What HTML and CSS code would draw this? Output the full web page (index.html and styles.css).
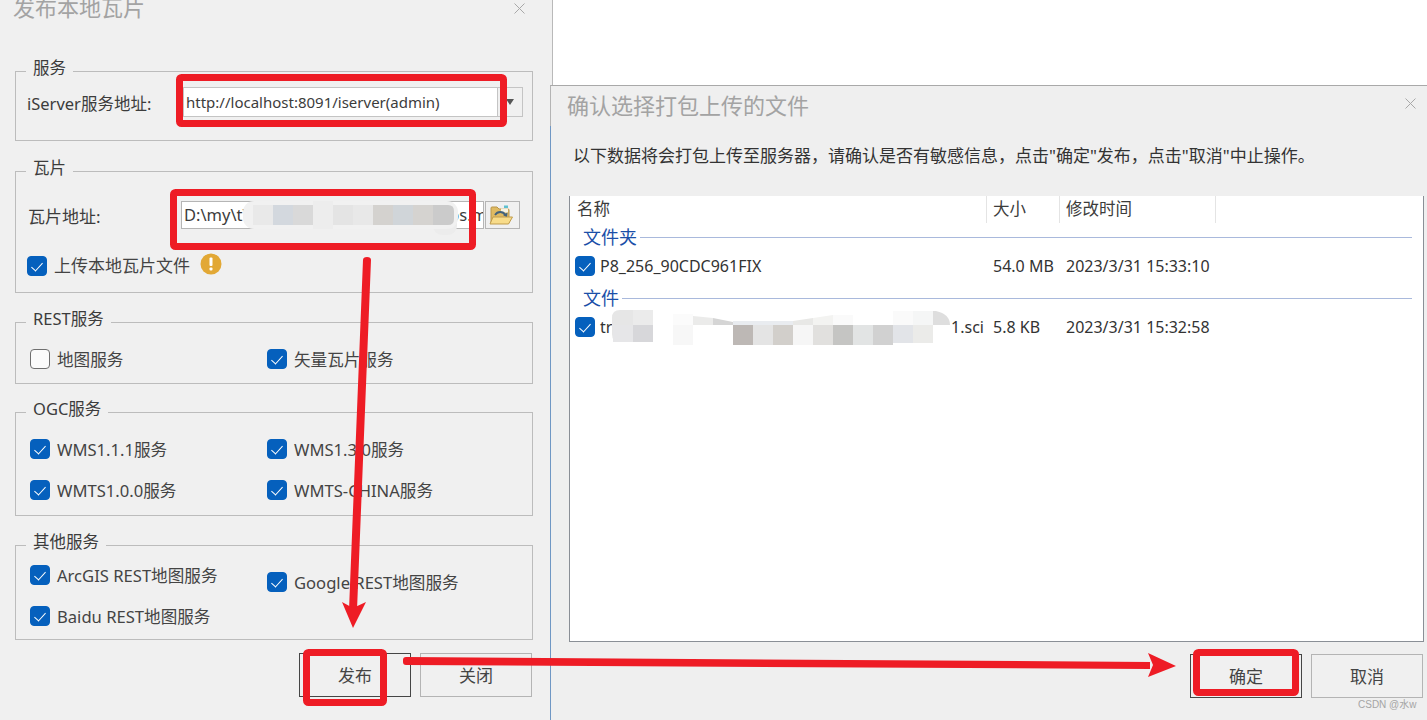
FILE: index.html
```html
<!DOCTYPE html>
<html lang="zh-CN">
<head>
  <meta charset="UTF-8">
  <title>发布本地瓦片</title>
  <link rel="stylesheet" href="styles.css">
</head>
<body>

  <!-- Publish dialog -->
  <section class="dialog publish">
    <div class="title-bar">
      <h1>发布本地瓦片</h1>
      <svg class="close" viewBox="0 0 11 11"><path d="M0.5 0.5l10 10M10.5 0.5l-10 10"/></svg>
    </div>

    <fieldset class="group g-server">
      <legend>服务</legend>
      <div class="field-row">
        <label class="server-label">iServer服务地址:</label>
        <div class="combo">
          <span class="combo-text">http://localhost:8091/iserver(admin)</span>
          <span class="combo-arrow"></span>
        </div>
      </div>
    </fieldset>

    <fieldset class="group g-tiles">
      <legend>瓦片</legend>
      <div class="field-row">
        <label class="tiles-label">瓦片地址:</label>
        <div class="path-input"><span>D:\my\t\</span><span class="path-end">os.m</span></div>
        <button class="browse" type="button">
          <svg viewBox="0 0 24 20" width="24" height="20">
            <path d="M2 18V3q0-1 1-1h5l2 2h9q1 0 1 1v13z" fill="#dfba62" stroke="#b8954a"/>
            <path d="M12 3.500h7v4h-7z" fill="#f7f3e2"/>
            <path d="M15 .5h4v2.500h-4z" fill="#5fc0cf"/>
            <path d="M6 10c2.500-4 8-4 10.500 0" fill="none" stroke="#43627c" stroke-width="1.800"/>
            <path d="M18.500 7.500l-.5 5-4-2.500z" fill="#43627c"/>
            <path d="M1 19l3-7h19.500l-4 7z" fill="#f8dc8a" stroke="#c09c4c"/>
          </svg>
        </button>
      </div>
      <div class="upload-row">
        <span class="check on"></span>
        <span class="opt-text">上传本地瓦片文件</span>
        <svg class="warn" viewBox="0 0 22 22" width="22" height="22">
          <circle cx="11" cy="11" r="10.500" fill="#e2a835"/>
          <rect x="9.500" y="4.500" width="3" height="8.500" rx="1" fill="#fff"/>
          <rect x="9.500" y="14.500" width="3" height="3" rx="1" fill="#fff"/>
        </svg>
      </div>
    </fieldset>

    <fieldset class="group g-rest">
      <legend>REST服务</legend>
      <div class="opts">
        <div class="opt"><span class="check"></span><span class="opt-text">地图服务</span></div>
        <div class="opt"><span class="check on"></span><span class="opt-text">矢量瓦片服务</span></div>
      </div>
    </fieldset>

    <fieldset class="group g-ogc">
      <legend>OGC服务</legend>
      <div class="opts">
        <div class="opt"><span class="check on"></span><span class="opt-text">WMS1.1.1服务</span></div>
        <div class="opt"><span class="check on"></span><span class="opt-text">WMS1.3.0服务</span></div>
        <div class="opt"><span class="check on"></span><span class="opt-text">WMTS1.0.0服务</span></div>
        <div class="opt"><span class="check on"></span><span class="opt-text">WMTS-CHINA服务</span></div>
      </div>
    </fieldset>

    <fieldset class="group g-other">
      <legend>其他服务</legend>
      <div class="opts">
        <div class="opt"><span class="check on"></span><span class="opt-text">ArcGIS REST地图服务</span></div>
        <div class="opt shifted"><span class="check on"></span><span class="opt-text">Google REST地图服务</span></div>
        <div class="opt"><span class="check on"></span><span class="opt-text">Baidu REST地图服务</span></div>
      </div>
    </fieldset>

    <div class="actions">
      <button class="btn primary" type="button">发布</button>
      <button class="btn" type="button">关闭</button>
    </div>
    <span class="grip"></span>
  </section>

  <!-- Confirm dialog -->
  <section class="dialog confirm">
    <div class="title-bar">
      <h1>确认选择打包上传的文件</h1>
      <svg class="close" viewBox="0 0 11 11"><path d="M0.5 0.5l10 10M10.5 0.5l-10 10"/></svg>
    </div>
    <p class="desc">以下数据将会打包上传至服务器，请确认是否有敏感信息，点击"确定"发布，点击"取消"中止操作。</p>

    <div class="file-list">
      <div class="list-head">
        <span>名称</span>
        <span>大小</span>
        <span>修改时间</span>
      </div>
      <div class="list-group"><span>文件夹</span><i></i></div>
      <div class="list-row">
        <span class="name"><span class="check on"></span>P8_256_90CDC961FIX</span>
        <span>54.0 MB</span>
        <span>2023/3/31 15:33:10</span>
      </div>
      <div class="list-group"><span>文件</span><i></i></div>
      <div class="list-row">
        <span class="name"><span class="check on"></span>tr<em class="name-end">1.sci</em></span>
        <span>5.8 KB</span>
        <span>2023/3/31 15:32:58</span>
      </div>
    </div>

    <div class="actions">
      <button class="btn primary" type="button">确定</button>
      <button class="btn" type="button">取消</button>
    </div>
  </section>

  <span class="watermark">CSDN @水w</span>

  <!-- Annotations drawn over the screenshot -->
  <svg class="marks" viewBox="0 0 1427 720" width="1427" height="720">
    <g class="smudge">
      <rect x="433" y="203" width="24" height="32" rx="9" fill="#ececec"/>
      <rect x="243" y="201" width="215" height="28" rx="11" fill="#f1f1f1"/>
      <rect x="253" y="205" width="20" height="20" fill="#e9e9e9"/>
      <rect x="273" y="205" width="20" height="20" fill="#d3d8de"/>
      <rect x="293" y="205" width="20" height="20" fill="#d9d9d9"/>
      <rect x="313" y="201" width="20" height="28" fill="#ededed"/>
      <rect x="333" y="205" width="20" height="20" fill="#e4e4e4"/>
      <rect x="353" y="205" width="20" height="20" fill="#e8e8e8"/>
      <rect x="373" y="205" width="20" height="20" fill="#d4d2cf"/>
      <rect x="393" y="205" width="20" height="20" fill="#d0d5d9"/>
      <rect x="413" y="205" width="20" height="20" fill="#d5d3d0"/>
      <path d="M433 205h15q6 0 6 6v8q0 6-6 6h-15z" fill="#cbcbcb"/>

      <path d="M620 310h33v32h-33q-8 0-8-8v-16q0-8 8-8z" fill="#e6e6e6"/>
      <rect x="633" y="310" width="20" height="15" fill="#ebebeb"/>
      <rect x="613" y="325" width="20" height="17" fill="#e6e6e8"/>
      <rect x="633" y="325" width="20" height="17" fill="#d7d7da"/>
      <rect x="673" y="314" width="20" height="11" fill="#fbfbfb"/>
      <rect x="673" y="325" width="20" height="20" fill="#f7f7f7"/>
      <path d="M693 316l20 2v7h-20z" fill="#ebebea"/>
      <path d="M713 318l20 4v3h-20z" fill="#d5d5d5"/>
      <path d="M733 321h60v4h-60z" fill="#e9ecf0"/>
      <path d="M793 321l20-3v7h-20z" fill="#e8e8e6"/>
      <path d="M813 318l20-3v10h-20z" fill="#f3f3f1"/>
      <path d="M833 315h20v10h-20z" fill="#fafafa"/>
      <path d="M893 311h20v14h-20z" fill="#fafafa"/>
      <path d="M913 311h20v14h-20z" fill="#f5f6f6"/>
      <path d="M933 311h3q14 3 14 14h-17z" fill="#dedede"/>
      <rect x="733" y="325" width="20" height="20" fill="#bdb8b5"/>
      <rect x="753" y="325" width="20" height="20" fill="#e4e4e4"/>
      <rect x="773" y="325" width="20" height="20" fill="#d2cfcb"/>
      <rect x="793" y="325" width="20" height="20" fill="#f6f6f6"/>
      <rect x="813" y="325" width="20" height="20" fill="#e1e0de"/>
      <rect x="833" y="325" width="20" height="20" fill="#c5c5c3"/>
      <rect x="853" y="325" width="20" height="20" fill="#e2e4e4"/>
      <rect x="873" y="325" width="20" height="20" fill="#d1d1d1"/>
      <rect x="893" y="325" width="20" height="18" fill="#e2e4e8"/>
      <rect x="913" y="325" width="20" height="18" fill="#ebebe9"/>
    </g>
    <g class="boxes">
      <rect x="179.500" y="77.500" width="324" height="46" rx="2"/>
      <rect x="173.500" y="192.500" width="299" height="54" rx="2"/>
      <rect x="306.500" y="652.500" width="77" height="50" rx="2"/>
      <rect x="1196.500" y="652.500" width="99" height="40" rx="2"/>
    </g>
    <g class="arrows">
      <path d="M363 260q0-3 4-3t4 3L357 610H349z"/>
      <path d="M342 602L353 628L366 602L353 608z"/>
      <path d="M403 660q0-3 3-3L1150 662V669L406 665q-3 0-3-3z"/>
      <path d="M1148 653L1176 666L1148 677L1153 665z"/>
    </g>
  </svg>

</body>
</html>
```

FILE: styles.css
```css
* {
  box-sizing: border-box;
}

body {
  margin: 0;
  width: 1427px;
  height: 720px;
  overflow: hidden;
  position: relative;
  background: #fff;
  font-family: "Noto Sans", "Noto Sans CJK SC", sans-serif;
  color: #3c3c3c;
}

.dialog {
  position: absolute;
  background: #f0f0f0;
}

.publish {
  left: 0;
  top: 0;
  width: 553px;
  height: 720px;
  padding: 0 19px 0 15px;
  border-right: 1px solid #b9b9b9;
}

.confirm {
  left: 550px;
  top: 85px;
  width: 877px;
  height: 635px;
  background: #efefef;
  border-top: 1px solid #a9a9a9;
  border-left: 1px solid #b4b4b4;
}

/* lower part of the window edge is the blue of the focused frame */
.confirm::before {
  content: "";
  position: absolute;
  left: -1px;
  top: 40px;
  bottom: 0;
  width: 1px;
  background: #6f97c4;
}

.title-bar {
  display: flex;
  justify-content: space-between;
  align-items: center;
}

.title-bar h1 {
  margin: 0;
  font-size: 22px;
  font-weight: 400;
  color: #a3a3a3;
}

.publish .title-bar {
  height: 59px;
  margin: 0 8px 0 -2px;
  align-items: flex-start;
}

.publish .title-bar h1 {
  line-height: 14px;
}

.publish .close {
  margin-top: 3px;
}

.confirm .title-bar {
  height: 41px;
  padding: 0 11px 6px 16px;
}

.close {
  width: 11px;
  height: 11px;
  fill: none;
  stroke: #a8a8a8;
}

/* group boxes */
.group {
  margin: 17px 0 0;
  padding: 0 0 0 11px;
  min-width: 0;
  border: 1px solid #bcbcbc;
  font-size: 16.600px;
}

.group legend {
  margin-left: -1px;
  padding: 0 7px;
  height: 24px;
  line-height: 18px;
  font-size: 16.500px;
}

.title-bar + .group {
  margin-top: 0;
}

.g-server {
  height: 82px;
}

.g-tiles {
  height: 134px;
  margin-top: 18px;
}

.g-rest {
  height: 74px;
}

.g-ogc {
  height: 116px;
  margin-top: 16px;
}

.g-other {
  height: 107px;
}

.field-row {
  display: flex;
  align-items: center;
}

.g-server .field-row {
  padding-top: 4px;
}

.g-tiles .field-row {
  padding-top: 18px;
  padding-left: 1px;
}

.server-label {
  width: 156px;
  font-size: 16.500px;
  padding-top: 1px;
}

.tiles-label {
  width: 153px;
  font-size: 17px;
}

.combo {
  width: 340px;
  height: 30px;
  display: flex;
  background: #f0f0f0;
  border: 1px solid #c4c4c4;
}

.combo-text {
  width: 314px;
  padding-left: 2px;
  background: #fff;
  border-right: 1px solid #c4c4c4;
  line-height: 28px;
  font-size: 15px;
  white-space: nowrap;
}

.combo-arrow {
  margin: 11px auto 0;
  width: 0;
  height: 0;
  border: 4px solid transparent;
  border-top: 6px solid #555;
}

.path-input {
  width: 303px;
  height: 28px;
  display: flex;
  justify-content: space-between;
  padding: 0 1px 0 2px;
  background: #fff;
  border: 1px solid #b5b5b5;
  line-height: 26px;
  font-size: 16.500px;
  overflow: hidden;
}

/* the path runs on past the right edge of the box */
.path-end {
  margin-right: -5px;
}

.browse {
  width: 35px;
  height: 28px;
  margin-left: 1px;
  padding: 0 4px 0 0;
  display: flex;
  align-items: center;
  justify-content: center;
  background: #f0f0f0;
  border: 1px solid #b5b5b5;
}

.upload-row {
  display: flex;
  align-items: center;
  margin-top: 25px;
}

.upload-row .opt-text {
  margin-left: 7px;
  margin-top: -2px;
  font-size: 17px;
}

.warn {
  margin-left: 10px;
  margin-top: -4px;
}

.opts {
  display: grid;
  grid-template-columns: 237px 237px;
  grid-auto-rows: 20px;
  row-gap: 21px;
  padding: 15px 0 0 3px;
}

.g-other .opts {
  padding-top: 8px;
}

.opt {
  display: flex;
  align-items: center;
  gap: 7px;
  white-space: nowrap;
}

.opt.shifted {
  margin-top: 14px;
}

.opt-text {
  white-space: nowrap;
  color: #444;
}

.check {
  display: inline-block;
  position: relative;
  flex: none;
  width: 20px;
  height: 20px;
  background: #fbfbfb;
  border: 1px solid #6f6f6f;
  border-radius: 4px;
}

.check.on {
  background: #0560bd;
  border-color: #0560bd;
}

.check.on::after {
  content: "";
  position: absolute;
  left: 6px;
  top: 3px;
  width: 5px;
  height: 10px;
  border: solid #fff;
  border-width: 0 1px 1px 0;
  transform: rotate(42deg);
}

.actions {
  display: flex;
  justify-content: flex-end;
  gap: 9px;
}

.publish .actions {
  margin-top: 13px;
  margin-right: 1px;
}

.confirm .actions {
  margin-top: 12px;
  margin-right: 4px;
}

.btn {
  width: 112px;
  height: 44px;
  padding: 0 0 2px;
  background: #f0f0f0;
  border: 1px solid #b4b4b4;
  font-family: inherit;
  font-size: 17px;
  color: #444;
}

.btn.primary {
  border-color: #454545;
}

.grip {
  position: absolute;
  right: 5px;
  bottom: 1px;
  width: 5px;
  height: 5px;
  background: radial-gradient(#8a8a8a 40%, transparent 45%) 0 0 / 2px 2px;
}

/* file list */
.desc {
  margin: 17px 0 0 22px;
  height: 24px;
  line-height: 24px;
  font-size: 17px;
  color: #333;
  white-space: nowrap;
}

.file-list {
  width: 855px;
  height: 446px;
  margin: 28px 0 0 18px;
  background: #fff;
  border: 1px solid #8a8f96;
  border-top: none;
  font-size: 16.500px;
}

.list-head,
.list-row {
  display: grid;
  grid-template-columns: 417px 73px 156px;
}

.list-head {
  height: 27px;
  line-height: 26px;
}

.list-head span {
  padding-left: 6px;
  border-right: 1px solid #e4e4e4;
}

.list-head span:first-child {
  padding-left: 7px;
}

.list-group {
  display: flex;
  align-items: center;
  height: 28px;
  padding: 0 11px 0 13px;
  gap: 3px;
  color: #1b4fa8;
  font-size: 18px;
}

.list-group span {
  margin-top: -3px;
}

.list-group i {
  flex: 1;
  height: 1px;
  background: #a9b9dc;
}

.list-row {
  height: 33px;
  line-height: 31px;
  white-space: nowrap;
  font-size: 16px;
  color: #333;
}

.list-row > span {
  padding-left: 6px;
}

.list-row > .name {
  display: flex;
  align-items: flex-start;
  padding-left: 5px;
  gap: 5px;
}

.list-row .check {
  margin-top: 5px;
}

.name-end {
  margin-left: auto;
  margin-right: 3px;
  font-style: normal;
}

.watermark {
  position: absolute;
  left: 1358px;
  top: 698px;
  font-family: "Liberation Sans", "Noto Sans CJK SC", sans-serif;
  font-size: 10px;
  line-height: 14px;
  color: #a5a5a5;
}

/* red annotations */
.marks {
  position: absolute;
  left: 0;
  top: 0;
  pointer-events: none;
}

.boxes rect {
  fill: none;
  stroke: #ee1c25;
  stroke-width: 7;
}

.arrows path {
  fill: #ee1c25;
}
```
